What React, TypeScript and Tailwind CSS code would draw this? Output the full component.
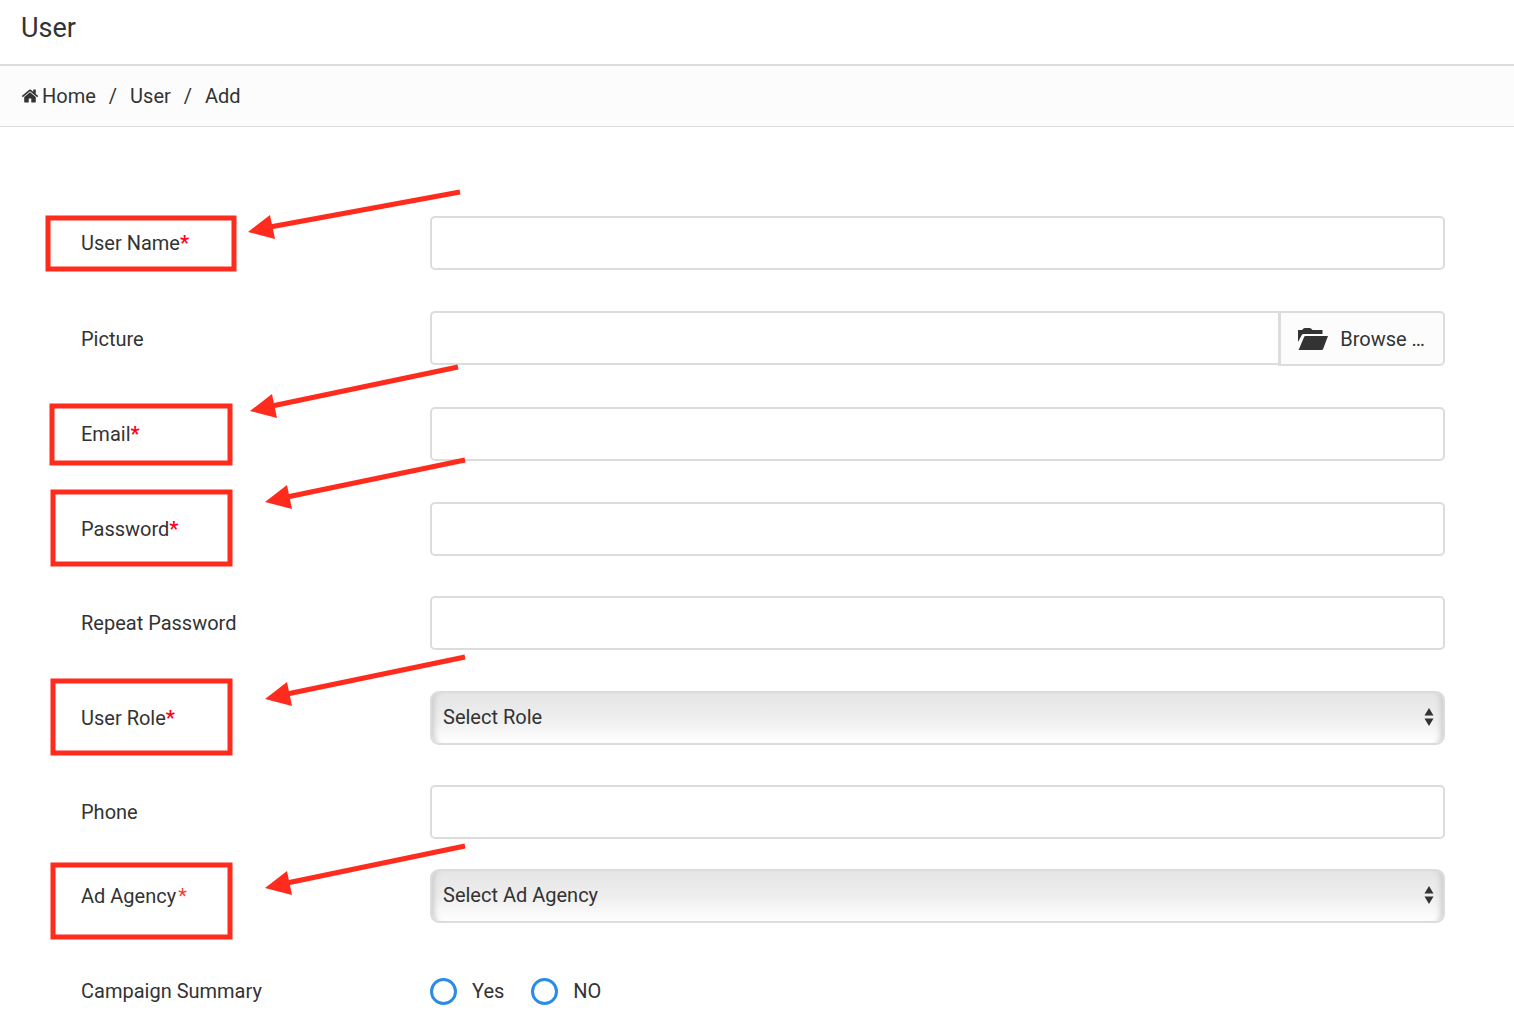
import React from "react";

type Point = [number, number];

interface CalloutProps {
  box: { x: number; y: number; width: number; height: number };
  tip: Point;
  tail: Point;
}

// red frame round a label, with an arrow pointing at it
const Callout = ({ box, tip, tail }: CalloutProps) => (
  <svg
    className="absolute left-0 top-0 w-px h-px overflow-visible pointer-events-none"
    fill="none"
    stroke="#ff2b1d"
    strokeWidth="5"
    aria-hidden="true"
  >
    <rect {...box} />
    <line x1={tip[0] + 22} y1={tip[1] - 5} x2={tail[0]} y2={tail[1]} />
    <path
      d="M0 0 22 -17 27 7Z"
      transform={`translate(${tip[0]} ${tip[1]})`}
      fill="#ff2b1d"
      stroke="none"
    />
  </svg>
);

interface RowProps {
  label: string;
  id: string;
  mark?: React.ReactNode;
  callout?: CalloutProps;
  children: React.ReactNode;
}

const Required = () => <span className="font-bold text-[#ff0022]">*</span>;

const Row = ({ label, id, mark, callout, children }: RowProps) => (
  <div className="relative flex items-center">
    <label htmlFor={id} className="w-[349px] shrink-0">
      {label}
      {mark}
    </label>
    <div className="flex-1 min-w-0">{children}</div>
    {callout && <Callout {...callout} />}
  </div>
);

const TextField = ({ id, type = "text" }: { id: string; type?: string }) => (
  <input
    id={id}
    type={type}
    className="block w-full h-[54px] px-3 bg-white border-2 border-[#dcdcdc] rounded-[5px]"
  />
);

const SelectField = ({ id, text }: { id: string; text: string }) => (
  <div className="relative">
    <select
      id={id}
      className="block w-full h-[54px] pl-[11px] pr-10 pb-0.5 appearance-none border-2 border-[#dcdcdc] rounded-[9px] bg-linear-to-b from-[#e5e5e5] via-[#eee] to-white shadow-[inset_8px_0_6px_-6px_#c8c8c8,inset_-8px_0_6px_-6px_#c8c8c8]"
    >
      <option>{text}</option>
    </select>
    <svg
      className="absolute right-[11px] top-[17px] w-[10px] h-[18px] pointer-events-none"
      viewBox="0 0 10 18"
      fill="#333"
      aria-hidden="true"
    >
      <path d="M5 0 9.500 7.500H.5zM5 18 .5 10.500h9z" />
    </svg>
  </div>
);

const Radio = ({ id, label }: { id: string; label: string }) => (
  <div className="flex items-center gap-[15px]">
    <input
      id={id}
      type="radio"
      name="campaignSummary"
      className="w-[27px] h-[27px] appearance-none rounded-full border-3 border-[#2b8be6] bg-white checked:bg-[#2b8be6]"
    />
    <label htmlFor={id}>{label}</label>
  </div>
);

const HomeIcon = () => (
  <svg className="w-[18px] h-[18px]" viewBox="0 0 1792 1792" fill="currentColor" aria-hidden="true">
    <path d="M1472 992v480q0 26-19 45t-45 19h-384v-384h-256v384h-384q-26 0-45-19t-19-45v-480q0-1 .5-3t.5-3l575-474 575 474q1 2 1 6zm223-69l-62 74q-8 9-21 11h-3q-13 0-21-7l-692-577-692 577q-12 8-24 7-13-2-21-11l-62-74q-8-10-7-23.500t11-21.500l719-599q32-26 76-26t76 26l244 204v-195q0-14 9-23t23-9h192q14 0 23 9t9 23v408l219 182q10 8 11 21.500t-7 23.500z" />
  </svg>
);

const FolderIcon = () => (
  <svg className="w-[30px] h-[22px]" viewBox="0 0 30 22" fill="currentColor" aria-hidden="true">
    <path d="M0 14V2H4L5.500.5Q6 0 7 0H11.500Q12.500 0 13 .5L14.500 2H24.500V6H5.500Q4.300 6 3.800 7ZM.6 22 6.200 8.800Q6.500 8 7.400 8H30L25 21.200Q24.700 22 23.800 22Z" />
  </svg>
);

const App = () => {
  return (
    <div className="min-h-screen bg-white text-[#333] text-xl leading-7 font-['Roboto',sans-serif]">
      <header className="h-[66px] px-[21px] pt-2 border-b-2 border-[#dcdcdc]">
        <h1 className="text-[27px] leading-10">User</h1>
      </header>

      <nav
        aria-label="Breadcrumb"
        className="flex items-center gap-[13px] h-[61px] px-[21px] bg-[#fcfcfc] border-b border-[#dcdcdc]"
      >
        <a href="#home" className="flex items-center gap-[3px]">
          <HomeIcon />
          Home
        </a>
        <span>/</span>
        <a href="#user">User</a>
        <span>/</span>
        <span>Add</span>
      </nav>

      <form className="pt-[89px] pb-6 pl-[81px] pr-[69px]">
        <div className="flex flex-col gap-[41px]">
          <Row
            id="username"
            label="User Name"
            mark={<Required />}
            callout={{
              box: { x: -33, y: 2, width: 186, height: 51 },
              tip: [167, 16],
              tail: [379, -24],
            }}
          >
            <TextField id="username" />
          </Row>

          <Row id="picture" label="Picture">
            <div className="flex">
              <input
                id="picture"
                type="text"
                className="flex-1 min-w-0 h-[54px] px-3 bg-white border-2 border-r-0 border-[#dcdcdc] rounded-l-[5px]"
              />
              <button
                type="button"
                className="flex items-center gap-3 h-[55px] pl-[17px] pr-[18px] bg-[#fcfcfc] border-2 border-l-3 border-[#dcdcdc] rounded-r-[5px]"
              >
                <FolderIcon />
                Browse …
              </button>
            </div>
          </Row>

          <Row
            id="email"
            label="Email"
            mark={<Required />}
            callout={{
              box: { x: -29, y: -1, width: 178, height: 57 },
              tip: [169, 4],
              tail: [377, -40],
            }}
          >
            <TextField id="email" type="email" />
          </Row>

          <Row
            id="password"
            label="Password"
            mark={<Required />}
            callout={{
              box: { x: -28, y: -10, width: 177, height: 72 },
              tip: [184, 0],
              tail: [384, -42],
            }}
          >
            <TextField id="password" type="password" />
          </Row>
        </div>

        <div className="mt-10 flex flex-col gap-[41px]">
          <Row id="repeatPassword" label="Repeat Password">
            <TextField id="repeatPassword" type="password" />
          </Row>

          <Row
            id="role"
            label="User Role"
            mark={<Required />}
            callout={{
              box: { x: -28, y: -10, width: 177, height: 72 },
              tip: [184, 8],
              tail: [384, -34],
            }}
          >
            <SelectField id="role" text="Select Role" />
          </Row>
        </div>

        <div className="mt-10 flex flex-col gap-[30px]">
          <Row id="phone" label="Phone">
            <TextField id="phone" type="tel" />
          </Row>

          <Row
            id="agency"
            label="Ad Agency"
            mark={<span className="ml-0.5 text-[#ff3b30]">*</span>}
            callout={{
              box: { x: -28, y: -4, width: 177, height: 72 },
              tip: [184, 19],
              tail: [384, -23],
            }}
          >
            <SelectField id="agency" text="Select Ad Agency" />
          </Row>
        </div>

        <fieldset className="mt-[54px] flex items-center">
          <legend className="float-left w-[349px]">Campaign Summary</legend>
          <div className="flex gap-[27px]">
            <Radio id="summaryYes" label="Yes" />
            <Radio id="summaryNo" label="NO" />
          </div>
        </fieldset>
      </form>
    </div>
  );
};

export default App;
